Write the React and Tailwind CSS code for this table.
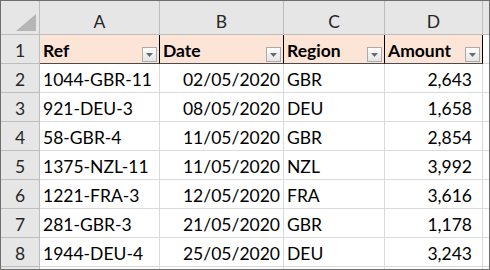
import React from "react";

const ROWS = [
  ["1044-GBR-11", "02/05/2020", "GBR", "2,643"],
  ["921-DEU-3", "08/05/2020", "DEU", "1,658"],
  ["58-GBR-4", "11/05/2020", "GBR", "2,854"],
  ["1375-NZL-11", "11/05/2020", "NZL", "3,992"],
  ["1221-FRA-3", "12/05/2020", "FRA", "3,616"],
  ["281-GBR-3", "21/05/2020", "GBR", "1,178"],
  ["1944-DEU-4", "25/05/2020", "DEU", "3,243"],
];

const HEADERS = ["Ref", "Date", "Region", "Amount"];
const LETTERS = ["A", "B", "C", "D"];
const WIDTHS = ["w-[120px]", "w-[124px]", "w-[101px]", "w-[98px]"];

function FilterButton() {
  return (
    <div className="absolute right-[2px] bottom-[1px] w-[15px] h-[15px] border border-[#ababab] bg-gradient-to-b from-white to-[#e4e4e4] flex items-center justify-center">
      <svg width="7" height="4" viewBox="0 0 7 4">
        <path d="M0 0 H7 L3.5 4 Z" fill="#6b6b6b" />
      </svg>
    </div>
  );
}

export default function App() {
  return (
    <div className="w-[490px] h-[270px] border border-[#6e6e6e] bg-white flex flex-col overflow-hidden font-['Lato',sans-serif] text-[17.5px] leading-none text-black">
      {/* column letters */}
      <div className="flex h-[34px] shrink-0 bg-[#e6e6e6] border-b border-[#bdbdbd]">
        <div className="w-[39px] shrink-0 border-r border-[#bdbdbd] relative">
          <svg className="absolute right-[3px] bottom-[3px]" width="20" height="17" viewBox="0 0 20 17">
            <path d="M20 0 V17 H0 Z" fill="#b5b5b5" />
          </svg>
        </div>
        {LETTERS.map((l, i) => (
          <div
            key={l}
            className={`${WIDTHS[i]} shrink-0 border-r border-[#bdbdbd] flex items-end justify-center pb-[4px] text-[#262626]`}
          >
            {l}
          </div>
        ))}
        <div className="flex-1" />
      </div>

      {/* table header row */}
      <div className="flex h-[29px] shrink-0">
        <div className="w-[39px] shrink-0 bg-[#e6e6e6] border-r border-b border-[#bdbdbd] flex items-end justify-center pb-[4px] text-[#262626]">
          1
        </div>
        {HEADERS.map((h, i) => (
          <div
            key={h}
            className={`${WIDTHS[i]} shrink-0 relative bg-[#fce4d6] border-r border-r-black border-b border-b-[#4a4a4a] flex items-end pl-[3px] pb-[4px] font-bold`}
          >
            {h}
            <FilterButton />
          </div>
        ))}
        <div className="flex-1 border-b border-[#dadada]" />
      </div>

      {/* data rows */}
      {ROWS.map((r, idx) => (
        <div key={idx} className="flex h-[29px] shrink-0">
          <div className="w-[39px] shrink-0 bg-[#e6e6e6] border-r border-b border-[#bdbdbd] flex items-end justify-center pb-[4px] text-[#262626]">
            {idx + 2}
          </div>
          <div className="w-[120px] shrink-0 border-r border-b border-[#dadada] flex items-end pl-[3px] pb-[4px]">
            {r[0]}
          </div>
          <div className="w-[124px] shrink-0 border-r border-b border-[#dadada] flex items-end justify-end pr-[3px] pb-[4px]">
            {r[1]}
          </div>
          <div className="w-[101px] shrink-0 border-r border-b border-[#dadada] flex items-end pl-[3px] pb-[4px]">
            {r[2]}
          </div>
          <div className="w-[98px] shrink-0 border-r border-b border-[#dadada] flex items-end justify-end pr-[10px] pb-[4px]">
            {r[3]}
          </div>
          <div className="flex-1 border-b border-[#dadada]" />
        </div>
      ))}

      {/* partial next row */}
      <div className="flex flex-1">
        <div className="w-[39px] shrink-0 bg-[#e6e6e6] border-r border-[#bdbdbd]" />
        <div className="w-[120px] shrink-0 border-r border-[#dadada]" />
        <div className="w-[124px] shrink-0 border-r border-[#dadada]" />
        <div className="w-[101px] shrink-0 border-r border-[#dadada]" />
        <div className="w-[98px] shrink-0 border-r border-[#dadada]" />
        <div className="flex-1" />
      </div>
    </div>
  );
}
